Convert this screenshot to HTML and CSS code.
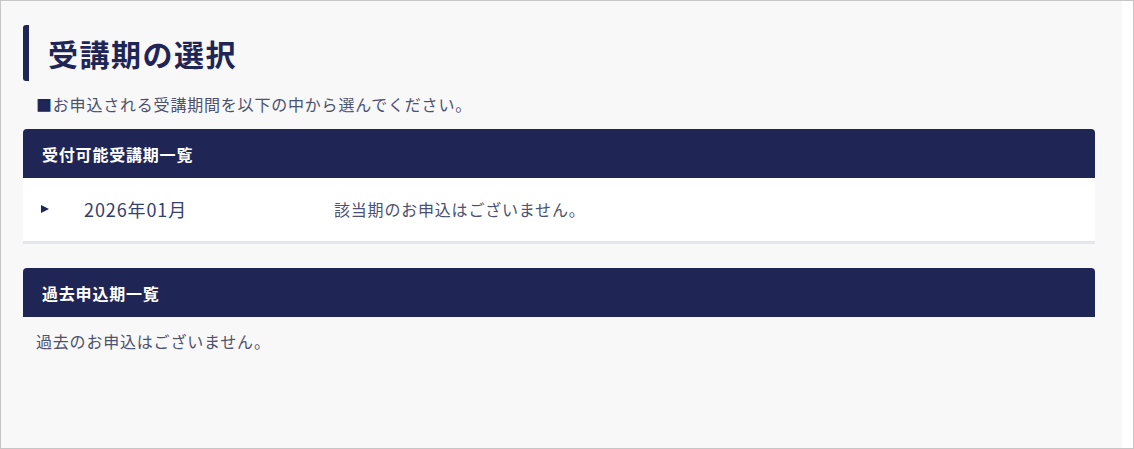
FILE: index.html
```html
<!DOCTYPE html>
<html lang="ja">
<head>
<meta charset="utf-8">
<link rel="stylesheet" href="styles.css">
</head>
<body>
<div class="frame">
  <main class="main">
    <h1 class="title">受講期の選択</h1>
    <p class="lead"><span class="sq">■</span>お申込される受講期間を以下の中から選んでください。</p>
    <section class="panel">
      <div class="panel-head">受付可能受講期一覧</div>
      <div class="row">
        <span class="tri"></span>
        <span class="date">2026年01月</span>
        <span class="msg">該当期のお申込はございません。</span>
      </div>
    </section>
    <section class="panel panel-past">
      <div class="panel-head">過去申込期一覧</div>
      <p class="empty">過去のお申込はございません。</p>
    </section>
  </main>
  <div class="side"></div>
</div>
</body>
</html>
```
FILE: styles.css
```css
* { box-sizing: border-box; }
html, body { margin: 0; padding: 0; background: #fff; }
body { font-family: "Noto Sans CJK JP", "Noto Sans", sans-serif; color: #4c5170; }
.frame {
  width: 1134px; height: 449px;
  border: 1px solid #c6c6c6;
  display: flex;
}
.main {
  width: 1121px;
  background: #f8f8f8;
  padding: 24px 26px 0 22px;
}
.side { flex: 1; background: #fff; }
.title {
  margin: 0;
  height: 56px;
  display: flex; align-items: center;
  font-size: 30px; font-weight: 700; color: #1f2656;
  letter-spacing: 0.05em;
  padding-left: 19px;
  border-left: 6px solid #1f2656;
  border-radius: 3px;
  line-height: 1;
}
.lead {
  margin: 12px 0 0 13px;
  font-size: 16px; line-height: 22px;
  letter-spacing: 0.05em;
}
.sq { color: #1f2656; }
.panel { width: 1072px; margin-top: 14px; }
.panel-head {
  height: 49px;
  background: #1f2656;
  color: #fff;
  font-size: 16px; font-weight: 700;
  letter-spacing: 0.05em;
  border-radius: 4px 4px 0 0;
  padding-left: 19px;
  display: flex; align-items: center;
}
.row {
  height: 66px;
  background: #fff;
  border-bottom: 3px solid #e3e6ea;
  padding-bottom: 2px;
  display: flex; align-items: center;
}
.tri {
  width: 0; height: 0;
  margin-left: 18px;
  border-left: 8px solid #1f2656;
  border-top: 4.5px solid transparent;
  border-bottom: 4.5px solid transparent;
}
.date {
  margin-left: 35px; width: 250px;
  font-size: 18px; letter-spacing: 0.05em; color: #33406e;
}
.msg { font-size: 16px; letter-spacing: 0.05em; }
.panel-past { margin-top: 24px; }
.empty {
  margin: 13px 0 0 13px;
  font-size: 16px; line-height: 22px; letter-spacing: 0.05em;
}
```
